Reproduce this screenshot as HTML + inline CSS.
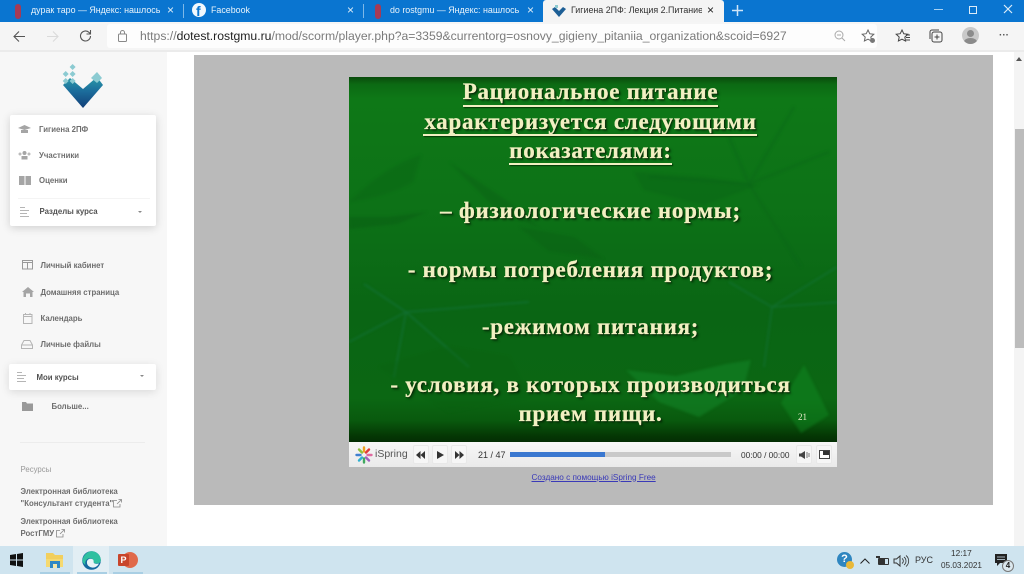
<!DOCTYPE html>
<html lang="ru"><head><meta charset="utf-8"><title>Гигиена 2ПФ</title>
<style>
html,body{margin:0;padding:0;width:1024px;height:574px;overflow:hidden;background:#fff;font-family:"Liberation Sans","DejaVu Sans",sans-serif}
.a{position:absolute}
.t{position:absolute;white-space:nowrap;line-height:1}
.tab{color:#e8f3fb;font-size:8.9px}
.nav{color:#555;font-size:7.8px;font-weight:bold;opacity:.85}
.sl{position:absolute;left:346.500px;width:488px;text-align:center;font-family:"Liberation Serif",serif;font-weight:bold;font-size:23px;letter-spacing:.75px;line-height:1;color:#f2f0c2;-webkit-text-stroke:.25px #f2f0c2;text-shadow:1px 1px 1px #0a2a08,2px 2px 2px rgba(0,30,0,.55);white-space:nowrap}
.ul{position:absolute;height:2px;background:#f2f0c2;box-shadow:1px 1px 1px rgba(0,30,0,.7)}
.btn{position:absolute;top:445px;width:14px;height:17px;background:#f6f6f6;border:1px solid #e8e8e8;border-radius:2px}
svg{position:absolute;overflow:visible}
</style></head><body>

<!-- tab strip -->
<div class="a" style="left:0;top:0;width:1024px;height:22px;background:#0a75d0"></div>
<div class="a" style="left:543px;top:0;width:181px;height:23px;background:#f4f4f4;border-radius:3px 3px 0 0"></div>
<div class="a" style="left:183px;top:4px;width:1px;height:14px;background:#7db8e8"></div>
<div class="a" style="left:363px;top:4px;width:1px;height:14px;background:#7db8e8"></div>
<div class="a" style="left:15px;top:4px;width:6px;height:15px;background:#a53a55;border-radius:3px"></div>
<div class="t tab" style="left:31px;top:6px;width:129px;overflow:hidden">дурак таро — Яндекс: нашлось</div>
<div class="t" style="left:167px;top:4px;color:#dcecf8;font-size:12px">×</div>
<div class="a" style="left:192px;top:3px;width:14px;height:14px;border-radius:50%;background:#f2f8fd"></div>
<div class="t" style="left:196px;top:4px;color:#0a75d0;font-size:14px;font-weight:bold">f</div>
<div class="t tab" style="left:211px;top:6px">Facebook</div>
<div class="t" style="left:347px;top:4px;color:#dcecf8;font-size:12px">×</div>
<div class="a" style="left:375px;top:4px;width:6px;height:15px;background:#a53a55;border-radius:3px"></div>
<div class="t tab" style="left:390px;top:6px;width:137px;overflow:hidden">do rostgmu — Яндекс: нашлось</div>
<div class="t" style="left:527px;top:4px;color:#dcecf8;font-size:12px">×</div>
<svg style="left:552px;top:5px" width="14" height="13" viewBox="0 0 14 13"><path d="M0 4l3-2 4 4 4-4 3 2-7 8z" fill="#1d5f96"/><rect x="3" y="0" width="3" height="3" fill="#8cc9d0"/></svg>
<div class="t" style="left:571px;top:6px;color:#333;font-size:8.900px;width:131px;overflow:hidden">Гигиена 2ПФ: Лекция 2.Питание</div>
<div class="t" style="left:707px;top:4px;color:#222;font-size:12px">×</div>
<svg style="left:731px;top:4px" width="13" height="13"><path d="M6.500 1v11M1 6.500h11" stroke="#cfe6f8" stroke-width="1.500"/></svg>
<div class="a" style="left:934px;top:9px;width:9px;height:1px;background:#a9d2f2"></div>
<div class="a" style="left:969px;top:6px;width:6px;height:6px;border:1.500px solid #dcecf8"></div>
<svg style="left:1003px;top:4px" width="11" height="11"><path d="M1 1l8 8M9 1l-8 8" stroke="#dcecf8" stroke-width="1.200"/></svg>

<!-- toolbar -->
<div class="a" style="left:0;top:22px;width:1024px;height:28px;background:#f5f5f5"></div>
<div class="a" style="left:107px;top:24px;width:770px;height:24px;background:#fdfdfd;border-radius:3px"></div>
<svg style="left:12px;top:30px" width="14" height="13"><path d="M13 6.500H2M7 1.500l-5 5 5 5" fill="none" stroke="#555" stroke-width="1.100"/></svg>
<svg style="left:46px;top:30px" width="14" height="13"><path d="M1 6.500h11M7 1.500l5 5-5 5" fill="none" stroke="#dadada" stroke-width="1.100"/></svg>
<svg style="left:79px;top:29px" width="14" height="14"><path d="M11.500 7a5 5 0 1 1-1.500-3.600L11.500 5M11.500 1v4h-4" fill="none" stroke="#555" stroke-width="1.100"/></svg>
<svg style="left:118px;top:30px" width="10" height="13"><rect x=".5" y="4" width="8" height="7.500" rx="1" fill="none" stroke="#888"/><path d="M2.500 4V2.500a2 2 0 0 1 4 0V4" fill="none" stroke="#888"/></svg>
<div class="t" style="left:140px;top:30px;font-size:12.200px;color:#7b7b7b">https://<span style="color:#222">dotest.rostgmu.ru</span>/mod/scorm/player.php?a=3359&amp;currentorg=osnovy_gigieny_pitaniia_organization&amp;scoid=6927</div>
<svg style="left:834px;top:30px" width="12" height="12"><circle cx="5" cy="5" r="4" fill="none" stroke="#aaa"/><path d="M8 8l3 3M3 5h4" stroke="#aaa"/></svg>
<svg style="left:861px;top:29px" width="15" height="15"><path d="M7 1l1.800 3.800 4 .5-3 2.800.8 4L7 10.200 3.400 12l.8-4-3-2.800 4-.5z" fill="none" stroke="#666"/><circle cx="11.500" cy="11.500" r="2.500" fill="#777"/></svg>
<svg style="left:896px;top:29px" width="15" height="15"><path d="M6 1l1.800 3.800 4 .5-3 2.800.8 4L6 10.200 2.400 12l.8-4-3-2.800 4-.5z" fill="none" stroke="#444"/><path d="M10 6h4M10 8.500h4M10 11h4" stroke="#444"/></svg>
<svg style="left:929px;top:29px" width="15" height="15"><rect x="3" y="3" width="10" height="10" rx="2" fill="none" stroke="#444"/><path d="M1 10V3a2 2 0 0 1 2-2h7M8 5.500v5M5.500 8h5" fill="none" stroke="#444"/></svg>
<div class="a" style="left:962px;top:27px;width:17px;height:17px;border-radius:50%;background:#c9c9c9;overflow:hidden"><div class="a" style="left:5px;top:3px;width:7px;height:7px;border-radius:50%;background:#8b8b8b"></div><div class="a" style="left:2px;top:11px;width:13px;height:8px;border-radius:50%;background:#8b8b8b"></div></div>
<div class="t" style="left:999px;top:31px;font-size:10px;font-weight:bold;color:#555">···</div>
<div class="a" style="left:0;top:50px;width:1024px;height:2px;background:#ebebeb"></div>

<!-- sidebar -->
<div class="a" style="left:0;top:52px;width:167px;height:494px;background:#f7f7f7"></div>
<svg style="left:62px;top:64px" width="42" height="45" viewBox="0 0 42 45">
<defs><linearGradient id="g" x1="0" y1="0" x2="0" y2="1"><stop offset="0" stop-color="#2a9aa8"/><stop offset=".45" stop-color="#1c6d9c"/><stop offset="1" stop-color="#123f78"/></linearGradient></defs>
<path d="M1 21l7-7 13 11 14-12 6 8-20 23z" fill="url(#g)"/>
<path d="M35 8l5 6-5 5-6-5z" fill="#8ccbd2"/>
<path d="M10.600 0l3 3-3 3-3-3zM3.700 7l3 3-3 3-3-3zM10.600 7l3 3-3 3-3-3zM3.700 14l3 3-3 3-3-3zM10.600 14l3 3-3 3-3-3z" fill="#8ccbd2"/>
</svg>

<div class="a" style="left:10px;top:115px;width:146px;height:111px;background:#fff;border-radius:2px;box-shadow:0 2px 9px rgba(0,0,0,.16)"></div>
<div class="a" style="left:18px;top:198px;width:132px;height:1px;background:#f4f4f4"></div>
<svg style="left:18px;top:125px" width="13" height="9"><path d="M0 3l6.500-3L13 3 6.500 5zM3 5v3h7V5" fill="#a5a5a5"/></svg>
<div class="t nav" style="left:39px;top:125.500px">Гигиена 2ПФ</div>
<svg style="left:18px;top:151px" width="13" height="9"><circle cx="6.500" cy="2" r="2" fill="#a5a5a5"/><circle cx="2" cy="3" r="1.500" fill="#bbb"/><circle cx="11" cy="3" r="1.500" fill="#bbb"/><rect x="3.500" y="5" width="6" height="3.500" fill="#a5a5a5"/></svg>
<div class="t nav" style="left:39px;top:151.500px">Участники</div>
<svg style="left:19px;top:176px" width="12" height="9"><rect width="5.500" height="9" fill="#a5a5a5"/><rect x="6.500" width="5.500" height="9" fill="#a5a5a5"/></svg>
<div class="t nav" style="left:39px;top:177px">Оценки</div>
<svg style="left:20px;top:207px" width="10" height="10"><path d="M0 .5h5M0 3.500h9M0 6.500h7M0 9.500h9" stroke="#b5b5b5"/></svg>
<div class="t nav" style="left:39.500px;top:208px;color:#333">Разделы курса</div>
<div class="a" style="left:138px;top:211px;border:2px solid transparent;border-top:2px solid #888"></div>

<svg style="left:22px;top:260px" width="12" height="10"><rect x=".5" y=".5" width="10" height="8.500" fill="none" stroke="#999"/><path d="M.5 2.500h10M5.500 2.500V9" stroke="#999"/></svg>
<div class="t nav" style="left:40.500px;top:261.500px">Личный кабинет</div>
<svg style="left:22px;top:287px" width="12" height="10"><path d="M0 5l6-5 6 5-1.500 0V10H8V6.500H4V10H1.500V5z" fill="#a5a5a5"/></svg>
<div class="t nav" style="left:40.500px;top:288.500px">Домашняя страница</div>
<svg style="left:23px;top:313px" width="10" height="11"><rect x=".5" y="1.500" width="8.500" height="9" fill="none" stroke="#b5b5b5"/><path d="M.5 3.500h8.500M2.500 0v2M7 0v2" stroke="#b5b5b5"/></svg>
<div class="t nav" style="left:40.500px;top:315px">Календарь</div>
<svg style="left:21px;top:340px" width="12" height="9"><path d="M.5 5L3 .5h6L11.500 5v3.500H.5zM.5 5h11" fill="none" stroke="#b5b5b5"/></svg>
<div class="t nav" style="left:40.500px;top:341px">Личные файлы</div>

<div class="a" style="left:9px;top:364px;width:147px;height:26px;background:#fff;border-radius:2px;box-shadow:0 2px 9px rgba(0,0,0,.12)"></div>
<svg style="left:17px;top:372px" width="10" height="10"><path d="M0 .5h5M0 3.500h9M0 6.500h7M0 9.500h9" stroke="#b5b5b5"/></svg>
<div class="t nav" style="left:36.500px;top:373.500px;color:#333">Мои курсы</div>
<div class="a" style="left:140px;top:375px;border:2px solid transparent;border-top:2px solid #888"></div>
<svg style="left:22px;top:402px" width="11" height="9"><path d="M0 0h4l1 1.500h6V9H0z" fill="#999"/></svg>
<div class="t nav" style="left:51.500px;top:403px">Больше...</div>
<div class="a" style="left:20px;top:442px;width:125px;height:1px;background:#ececec"></div>
<div class="t" style="left:20.500px;top:465.500px;font-size:7.800px;color:#999">Ресурсы</div>
<div class="t nav" style="left:20.500px;top:488px">Электронная библиотека</div>
<div class="t nav" style="left:20.500px;top:499.500px">"Консультант студента"</div>
<svg style="left:113px;top:499px" width="9" height="9"><path d="M7 5v3H.5V1.500H4M4 5l4.500-4.500M5.500.5h3v3" fill="none" stroke="#888" stroke-width=".8"/></svg>
<div class="t nav" style="left:20.500px;top:518px">Электронная библиотека</div>
<div class="t nav" style="left:20.500px;top:529.500px">РостГМУ</div>
<svg style="left:56px;top:529px" width="9" height="9"><path d="M7 5v3H.5V1.500H4M4 5l4.500-4.500M5.500.5h3v3" fill="none" stroke="#888" stroke-width=".8"/></svg>

<!-- content -->
<div class="a" style="left:194px;top:55px;width:799px;height:450px;background:#bababa"></div>
<div class="a" style="left:1014px;top:52px;width:10px;height:494px;background:#f4f4f4"></div>
<div class="a" style="left:1015px;top:129px;width:9px;height:219px;background:#bcbcbc"></div>
<div class="a" style="left:1016px;top:57px;border:3px solid transparent;border-bottom:4px solid #555;border-top:0"></div>

<!-- slide -->
<div class="a" style="left:349px;top:77px;width:488px;height:365px;overflow:hidden;background:linear-gradient(180deg,#0a4a0c 0,#0c6a13 2%,#0e7817 6%,#0d7217 35%,#0a6514 65%,#0b6713 88%,#095a0e 94%,#053a05 98%,#032c03 100%)">
<svg style="left:0;top:0;filter:blur(1.2px)" width="488" height="365" viewBox="0 0 488 365">
<path d="M0 125C25 100 50 85 72 78L64 105C40 118 20 122 0 125z" fill="#0a6314" opacity=".4"/>
<path d="M0 140h40l38-5-30 12-48 5z" fill="#0a6014" opacity=".6"/>
<path d="M100 85l60 40 30 25-40-15zM170 150l55 10 30 22-55-8z" fill="#0a6014" opacity=".4"/>
<path d="M285 95l70 5 55 8-55 20-60-15z" fill="#0a6014" opacity=".35"/>
<path d="M400 107L445 30M400 107L380 60M400 107L480 75M400 107L300 100M400 107L452 190" stroke="#0a6218" stroke-width="2" fill="none" opacity=".4"/>
<path d="M57 235L15 207M57 235L0 265M57 235C100 232 140 228 180 225M57 235L45 300M57 235L120 290" stroke="#17784a" stroke-width="1.500" fill="none" opacity=".55"/>
<path d="M423 230L380 205M423 230L488 190M423 230L490 225M423 230L415 290" stroke="#17784a" stroke-width="1.500" fill="none" opacity=".5"/>
<path d="M277 293l50 6 50-12 25-4-8 30-44 27-40-15z" fill="#14882a" opacity=".5"/>
<path d="M455 288l25 50-28 18-20-30z" fill="#129025" opacity=".4"/>
<path d="M30 290l70-20 60 10 20 40-80 15z" fill="#0a5f12" opacity=".3"/>
</svg>
</div>
<div class="sl" style="top:80px">Рациональное питание</div>
<div class="ul" style="left:463px;top:104.500px;width:255px"></div>
<div class="sl" style="top:109.500px">характеризуется следующими</div>
<div class="ul" style="left:423px;top:134px;width:334px"></div>
<div class="sl" style="top:139px">показателями:</div>
<div class="ul" style="left:509px;top:163px;width:163px"></div>
<div class="sl" style="top:199px">– физиологические нормы;</div>
<div class="sl" style="top:258px">- нормы потребления продуктов;</div>
<div class="sl" style="top:315px">-режимом питания;</div>
<div class="sl" style="top:373px">- условия, в которых производиться</div>
<div class="sl" style="top:402px">прием пищи.</div>
<div class="t" style="left:798px;top:413px;font-family:'Liberation Serif',serif;font-size:9px;color:#efefcf">21</div>

<!-- player -->
<div class="a" style="left:349px;top:442px;width:488px;height:25px;background:linear-gradient(#f7f7f7,#eaeaea)"></div>
<svg style="left:355px;top:446px" width="18" height="18" viewBox="0 0 18 18"><g stroke-width="2.400" stroke-linecap="round"><path d="M9 1.500v4" stroke="#f0a020"/><path d="M14 3.500l-3 3" stroke="#e03a3a"/><path d="M16.500 9h-4" stroke="#e06aa0"/><path d="M14 14.500l-3-3" stroke="#a060c0"/><path d="M9 16.500v-4" stroke="#40a860"/><path d="M4 14.500l3-3" stroke="#30b0d0"/><path d="M1.500 9h4" stroke="#4080d0"/><path d="M4 3.500l3 3" stroke="#90c040"/></g></svg>
<div class="t" style="left:375px;top:449px;font-size:10.500px;color:#555">iSpring</div>
<div class="btn" style="left:413px"></div><div class="btn" style="left:432px"></div><div class="btn" style="left:451px"></div><div class="btn" style="left:796px"></div><div class="btn" style="left:816px"></div>
<svg style="left:416px;top:451px" width="9" height="8"><path d="M4.500 0v8L0 4zM9 0v8L4.500 4z" fill="#333"/></svg>
<svg style="left:437px;top:451px" width="7" height="8"><path d="M0 0l7 4-7 4z" fill="#333"/></svg>
<svg style="left:455px;top:451px" width="9" height="8"><path d="M0 0l4.500 4L0 8zM4.500 0L9 4 4.500 8z" fill="#333"/></svg>
<div class="t" style="left:478px;top:450.500px;font-size:9px;color:#333">21 / 47</div>
<div class="a" style="left:510px;top:452px;width:221px;height:5px;background:#c9c9c9"></div>
<div class="a" style="left:510px;top:452px;width:95px;height:5px;background:#3a78d0"></div>
<div class="t" style="left:741px;top:450.500px;font-size:8.300px;color:#333">00:00 / 00:00</div>
<svg style="left:799px;top:451px" width="11" height="8"><path d="M0 2.500h2L6 0v8L2 5.500H0z" fill="#444"/><path d="M8 1v6M10 2v4" stroke="#777"/></svg>
<svg style="left:819px;top:450px" width="11" height="9"><rect x=".5" y=".5" width="10" height="8" fill="#fff" stroke="#444"/><rect x="4" y="1" width="6" height="4" fill="#333"/></svg>
<div class="t" style="left:531.500px;top:473.500px;font-size:8.200px;color:#3a3ab8;text-decoration:underline">Создано с помощью iSpring Free</div>

<!-- taskbar -->
<div class="a" style="left:0;top:546px;width:1024px;height:28px;background:#cfe4ef"></div>
<div class="a" style="left:73px;top:546px;width:36px;height:28px;background:#e2eef4"></div>
<svg style="left:10px;top:553px" width="13" height="14"><path d="M0 2l6-1v5.500H0zM7 1l6-1v6.500H7zM0 7.500h6V13l-6-1zM7 7.500h6V14l-6-1z" fill="#111"/></svg>
<svg style="left:46px;top:553px" width="18" height="15"><path d="M0 0h7l2 2h8v12H0z" fill="#f2cf5d"/><rect x="0" y="6" width="17" height="8" fill="#f5d970"/><rect x="4" y="8" width="10" height="7" fill="#2f88c5"/><rect x="7" y="11" width="4" height="4" fill="#f5e7a8"/></svg>
<svg style="left:82px;top:551px" width="19" height="19" viewBox="0 0 19 19"><circle cx="9.500" cy="9.500" r="9.300" fill="#14689f"/><path d="M.5 9C1.500 3.500 6 .2 9.500.2c5 0 9.300 4 9.300 8.800 0 2.500-2 3.500-4 3.500-2.500 0-3.500-1-3.500-2.500C11.300 7.500 8 6.500 5.500 8 3 9.500 3 12 3.500 14 1.500 12.500.3 11 .5 9z" fill="#2fc0a0"/><path d="M5 10.500c.5-2.500 3.500-3.500 6-2 1 .8.3 2.700 1 3.500 1 1 3 1 5 .5-1.500 3-4.500 4.500-7 4-3.500-.5-5.500-3-5-6z" fill="#e8f3f6"/></svg>
<div class="a" style="left:122px;top:552px;width:16px;height:16px;border-radius:50%;background:#e0694a"></div>
<div class="a" style="left:118px;top:554px;width:11px;height:12px;background:#c8452b;border-radius:1px;color:#fff;font-size:9px;font-weight:bold;text-align:center;line-height:12px">P</div>
<div class="a" style="left:40px;top:572px;width:30px;height:2px;background:#a9cfe4"></div>
<div class="a" style="left:77px;top:572px;width:30px;height:2px;background:#a9cfe4"></div>
<div class="a" style="left:113px;top:572px;width:30px;height:2px;background:#a9cfe4"></div>

<div class="a" style="left:837px;top:552px;width:15px;height:15px;border-radius:50%;background:#2f86c0;color:#fff;font-size:11px;font-weight:bold;text-align:center;line-height:15px">?</div>
<div class="a" style="left:846px;top:561px;width:8px;height:8px;border-radius:50%;background:#e8b838"></div>
<svg style="left:860px;top:558px" width="10" height="6"><path d="M.5 5.500L5 1l4.500 4.500" fill="none" stroke="#222" stroke-width="1"/></svg>
<svg style="left:876px;top:556px" width="13" height="10"><rect x="2" y="2" width="11" height="7" rx="1" fill="#333"/><rect x="0" y="0" width="4" height="2" fill="#333"/><rect x="9" y="3" width="3" height="5" fill="#cfe4ef"/></svg>
<svg style="left:894px;top:555px" width="15" height="12"><path d="M0 4h2.500L6 1v10L2.500 8H0z" fill="none" stroke="#333"/><path d="M8 3.500a3 3 0 0 1 0 5M10 2a5 5 0 0 1 0 8M12 .5a7 7 0 0 1 0 11" fill="none" stroke="#333" stroke-width=".8"/></svg>
<div class="t" style="left:915px;top:556px;font-size:9px;color:#333">РУС</div>
<div class="t" style="left:951px;top:549px;font-size:8.300px;color:#333">12:17</div>
<div class="t" style="left:941px;top:562px;font-size:8.200px;color:#333">05.03.2021</div>
<svg style="left:995px;top:554px" width="14" height="13"><path d="M0 0h12v9H5l-3 3V9H0z" fill="#222"/><path d="M2 3h8M2 5.500h8" stroke="#cfe4ef" stroke-width=".7"/></svg>
<div class="a" style="left:1002px;top:560px;width:10px;height:10px;border-radius:50%;background:#dce8ee;border:1px solid #777;color:#222;font-size:8px;font-weight:bold;text-align:center;line-height:10px">4</div>
</body></html>
